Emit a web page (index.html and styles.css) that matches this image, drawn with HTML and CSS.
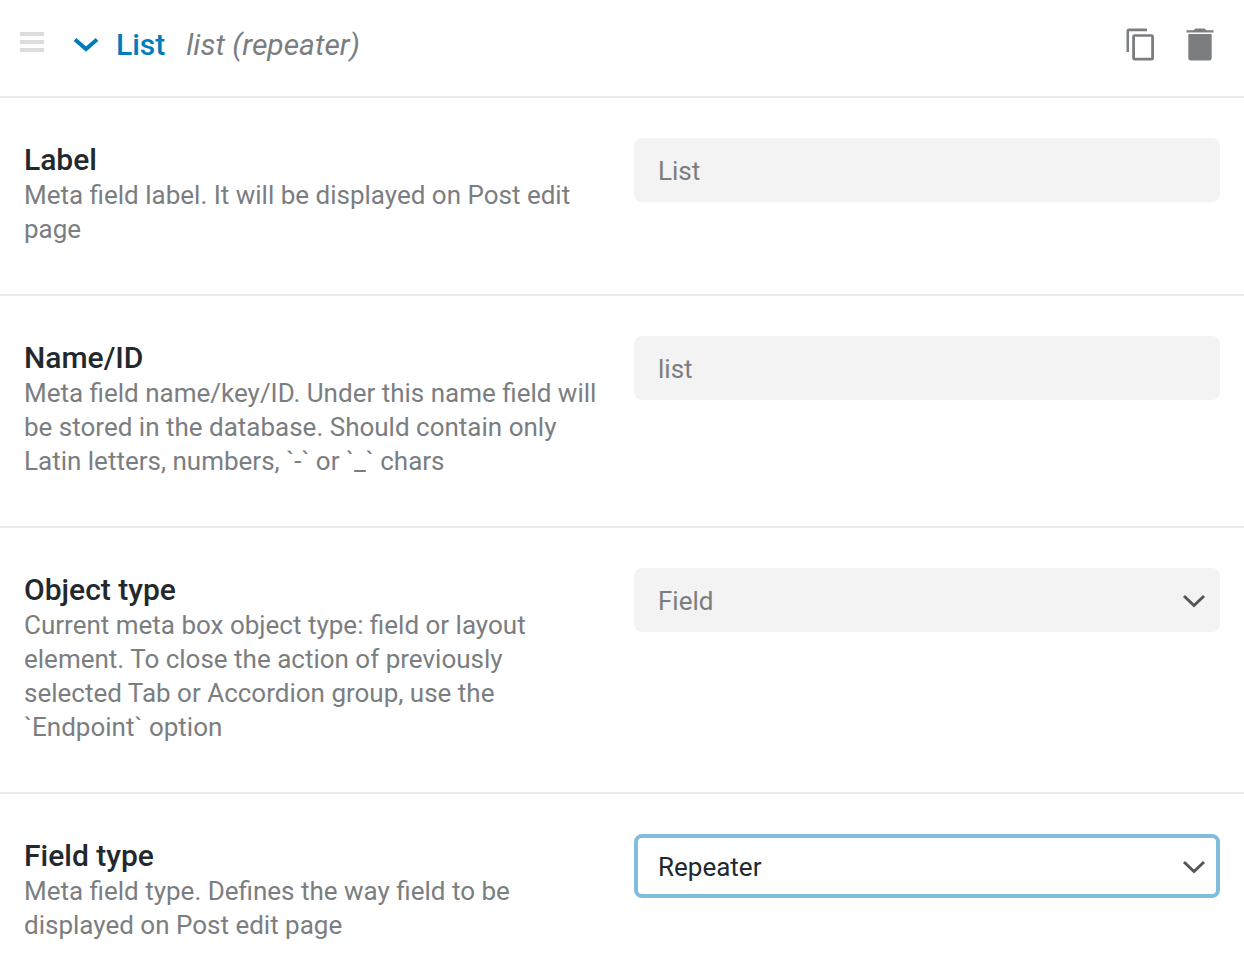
FILE: index.html
```
<!DOCTYPE html>
<html lang="en">
<head>
  <meta charset="UTF-8" />
  <meta name="viewport" content="width=device-width, initial-scale=1" />
  <title>Meta fields</title>
  <link rel="stylesheet" href="styles.css">
</head>
<body>
  <div class="field-item">
    <header class="item-head">
      <span class="drag-handle"></span>
      <button type="button" class="toggle" aria-expanded="true">
        <svg class="toggle-icon" width="26" height="16" viewBox="0 0 26 16" aria-hidden="true"><path d="M2 2.5 L13 12 L24 2.5" /></svg>
        <span class="item-title">List</span>
      </button>
      <span class="item-subtitle">list (repeater)</span>
      <div class="item-actions">
        <button type="button" aria-label="Duplicate">
          <svg width="30" height="34" viewBox="0 0 30 34" aria-hidden="true"><path d="M21 0.5H3Q0.5 0.5 0.5 3V24H3V3.2H21Z" /><path fill-rule="evenodd" d="M8.5 6.3H25.5Q28 6.3 28 9V30Q28 32.5 25.5 32.5H8.5Q6.2 32.5 6.2 30V9Q6.2 6.3 8.5 6.3ZM9 8.8V29.8H25.2V8.8Z" /></svg>
        </button>
        <button type="button" aria-label="Delete">
          <svg width="28" height="34" viewBox="0 0 28 34" aria-hidden="true"><path d="M0.5 2.2H7.5L9.5 0.5H18.5L20.5 2.2H27.5V4.4H0.5Z" /><path d="M2.3 6H25.7V30Q25.7 32.5 23 32.5H5Q2.3 32.5 2.3 30Z" /></svg>
        </button>
      </div>
    </header>

    <div class="row">
      <div class="row-info">
        <label for="fieldLabel">Label</label>
        <p>Meta field label. It will be displayed on Post edit page</p>
      </div>
      <div class="row-control">
        <input type="text" id="fieldLabel" value="List" />
      </div>
    </div>

    <div class="row">
      <div class="row-info">
        <label for="fieldName">Name/ID</label>
        <p>Meta field name/key/ID. Under this name field will be stored in the database. Should contain only Latin letters, numbers, `-` or `_` chars</p>
      </div>
      <div class="row-control">
        <input type="text" id="fieldName" value="list" />
      </div>
    </div>

    <div class="row">
      <div class="row-info">
        <label for="objectType">Object type</label>
        <p>Current meta box object type: field or layout element. To close the action of previously selected Tab or Accordion group, use the `Endpoint` option</p>
      </div>
      <div class="row-control">
        <select id="objectType">
          <option selected>Field</option>
          <option>Tab</option>
          <option>Accordion</option>
          <option>Endpoint</option>
        </select>
        <svg class="arrow" width="24" height="14" viewBox="0 0 24 14" aria-hidden="true"><path d="M2 2 L12 11.5 L22 2" /></svg>
      </div>
    </div>

    <div class="row">
      <div class="row-info">
        <label for="fieldType">Field type</label>
        <p>Meta field type. Defines the way field to be displayed on Post edit page</p>
      </div>
      <div class="row-control">
        <select id="fieldType" class="active">
          <option>Text</option>
          <option selected>Repeater</option>
        </select>
        <svg class="arrow" width="24" height="14" viewBox="0 0 24 14" aria-hidden="true"><path d="M2 2 L12 11.5 L22 2" /></svg>
      </div>
    </div>
  </div>
</body>
</html>
```

FILE: styles.css
```
* {
  box-sizing: border-box;
}

body {
  font-family: Roboto, sans-serif;
  font-size: 26px;
  line-height: 34px;
  color: #7b7e81;
  background: #fff;
  margin: 0;
}

button {
  font: inherit;
  color: inherit;
  background: none;
  border: none;
  padding: 0;
  cursor: pointer;
}

.item-head {
  display: flex;
  align-items: center;
  height: 98px;
  padding: 0 30px 6px 20px;
  border-bottom: 2px solid #ececec;
}

.drag-handle {
  width: 24px;
  height: 20px;
  margin: 0 29px 6px 0;
  background: repeating-linear-gradient(#dcdcdc 0 4px, transparent 4px 8px);
}

.toggle {
  display: flex;
  align-items: center;
  gap: 17px;
  margin-right: 21px;
}

.toggle-icon path {
  fill: none;
  stroke: #007cba;
  stroke-width: 4;
}

.item-title {
  font-size: 30px;
  font-weight: 500;
  line-height: 36px;
  color: #007cba;
}

.item-subtitle {
  font-size: 30px;
  font-style: italic;
  line-height: 36px;
}

.item-actions {
  display: flex;
  gap: 30px;
  margin-left: auto;
}

.item-actions svg {
  display: block;
  fill: #7b7e81;
}

.row {
  display: grid;
  grid-template-columns: 1fr 1fr;
  gap: 24px;
  padding: 40px 24px;
  border-bottom: 2px solid #ececec;
}

.row:last-child {
  border-bottom: none;
}

.row-info {
  padding: 4px 8px 8px 0;
}

.row-info label {
  display: block;
  font-size: 30px;
  font-weight: 500;
  line-height: 36px;
  color: #23282d;
}

.row-info p {
  margin: 0;
}

.row-control {
  position: relative;
}

input,
select {
  display: block;
  width: 100%;
  height: 64px;
  padding: 2px 24px 0;
  font: inherit;
  color: #7b7e81;
  background: #f3f3f3;
  border: none;
  border-radius: 8px;
  appearance: none;
  outline: none;
}

select.active {
  padding: 2px 20px 0;
  color: #23282d;
  background: #fff;
  border: 4px solid #80bddd;
}

.arrow {
  position: absolute;
  top: 26px;
  right: 14px;
  pointer-events: none;
}

.arrow path {
  fill: none;
  stroke: #555;
  stroke-width: 3;
}
```
